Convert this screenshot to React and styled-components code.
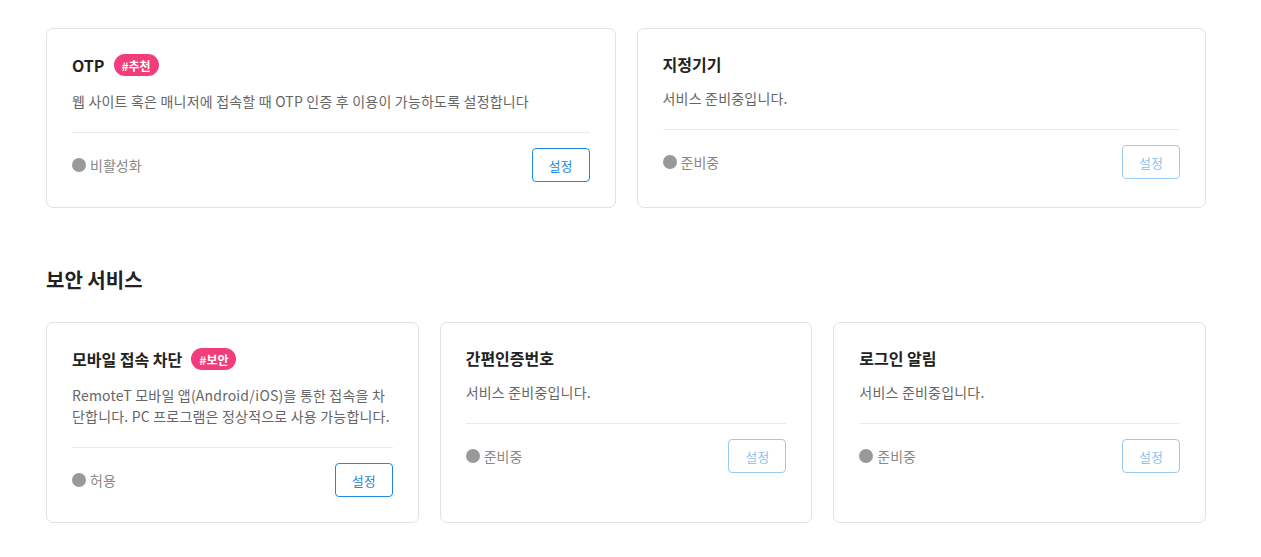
import React from "react";
import styled, { createGlobalStyle, css } from "styled-components";

const Global = createGlobalStyle`
  html, body { margin: 0; padding: 0; background: #fff; }
  body { font-family: "Noto Sans CJK KR", "Noto Sans", sans-serif; color: #222; }
  * { box-sizing: border-box; }
`;

const Page = styled.div`
  width: 1160px;
  margin-left: 46px;
  padding-top: 28px;
`;

const Grid = styled.div`
  display: grid;
  grid-template-columns: repeat(${(p) => p.$cols}, 1fr);
  gap: 21px;
`;

const SectionTitle = styled.h2`
  margin: 57px 0 27px;
  font-size: 20px;
  line-height: 30px;
  font-weight: 700;
  color: #222;
`;

const Card = styled.div`
  border: 1px solid #e2e2e2;
  border-radius: 7px;
  padding: 25px;
  background: #fff;
  display: flex;
  flex-direction: column;
`;

const TitleRow = styled.div`
  display: flex;
  align-items: center;
  gap: 9px;
  height: ${(p) => (p.$badge ? "22px" : "19px")};
`;

const Title = styled.div`
  font-size: 16px;
  font-weight: 700;
  color: #222;
  line-height: 20px;
`;

const Badge = styled.span`
  display: inline-flex;
  align-items: center;
  height: 22px;
  padding: 0 8px;
  border-radius: 11px;
  background: #f23d7a;
  color: #fff;
  font-size: 12px;
  font-weight: 700;
`;

const Desc = styled.p`
  margin: 15px 0 0;
  font-size: 14px;
  line-height: 21px;
  letter-spacing: 0.2px;
  word-break: break-all;
  color: #666;
`;

const Divider = styled.div`
  height: 1px;
  background: #ebebeb;
  margin-top: 20px;
`;

const Footer = styled.div`
  display: flex;
  align-items: center;
  justify-content: space-between;
  padding-top: 15px;
`;

const Status = styled.div`
  display: flex;
  align-items: center;
  gap: 4px;
  font-size: 14px;
  color: #888;
`;

const Dot = styled.span`
  width: 14px;
  height: 14px;
  border-radius: 50%;
  background: #999;
`;

const Button = styled.button`
  width: 58px;
  height: 34px;
  border-radius: 4px;
  background: #fff;
  font-family: inherit;
  font-size: 13px;
  cursor: pointer;
  border: 1px solid #1e88e5;
  color: #1e88e5;
  ${(p) =>
    p.disabled &&
    css`
      border-color: #9ccbf2;
      color: #90c2ee;
      cursor: default;
    `}
`;

function ServiceCard({ title, badge, desc, status, disabled }) {
  return (
    <Card>
      <TitleRow $badge={!!badge}>
        <Title>{title}</Title>
        {badge && <Badge>{badge}</Badge>}
      </TitleRow>
      <Desc>{desc}</Desc>
      <Divider />
      <Footer>
        <Status>
          <Dot />
          {status}
        </Status>
        <Button disabled={disabled}>설정</Button>
      </Footer>
    </Card>
  );
}

export default function App() {
  return (
    <>
      <Global />
      <Page>
        <Grid $cols={2}>
          <ServiceCard
            title="OTP"
            badge="#추천"
            desc="웹 사이트 혹은 매니저에 접속할 때 OTP 인증 후 이용이 가능하도록 설정합니다"
            status="비활성화"
          />
          <ServiceCard title="지정기기" desc="서비스 준비중입니다." status="준비중" disabled />
        </Grid>
        <SectionTitle>보안 서비스</SectionTitle>
        <Grid $cols={3}>
          <ServiceCard
            title="모바일 접속 차단"
            badge="#보안"
            desc="RemoteT 모바일 앱(Android/iOS)을 통한 접속을 차단합니다. PC 프로그램은 정상적으로 사용 가능합니다."
            status="허용"
          />
          <ServiceCard title="간편인증번호" desc="서비스 준비중입니다." status="준비중" disabled />
          <ServiceCard title="로그인 알림" desc="서비스 준비중입니다." status="준비중" disabled />
        </Grid>
      </Page>
    </>
  );
}
